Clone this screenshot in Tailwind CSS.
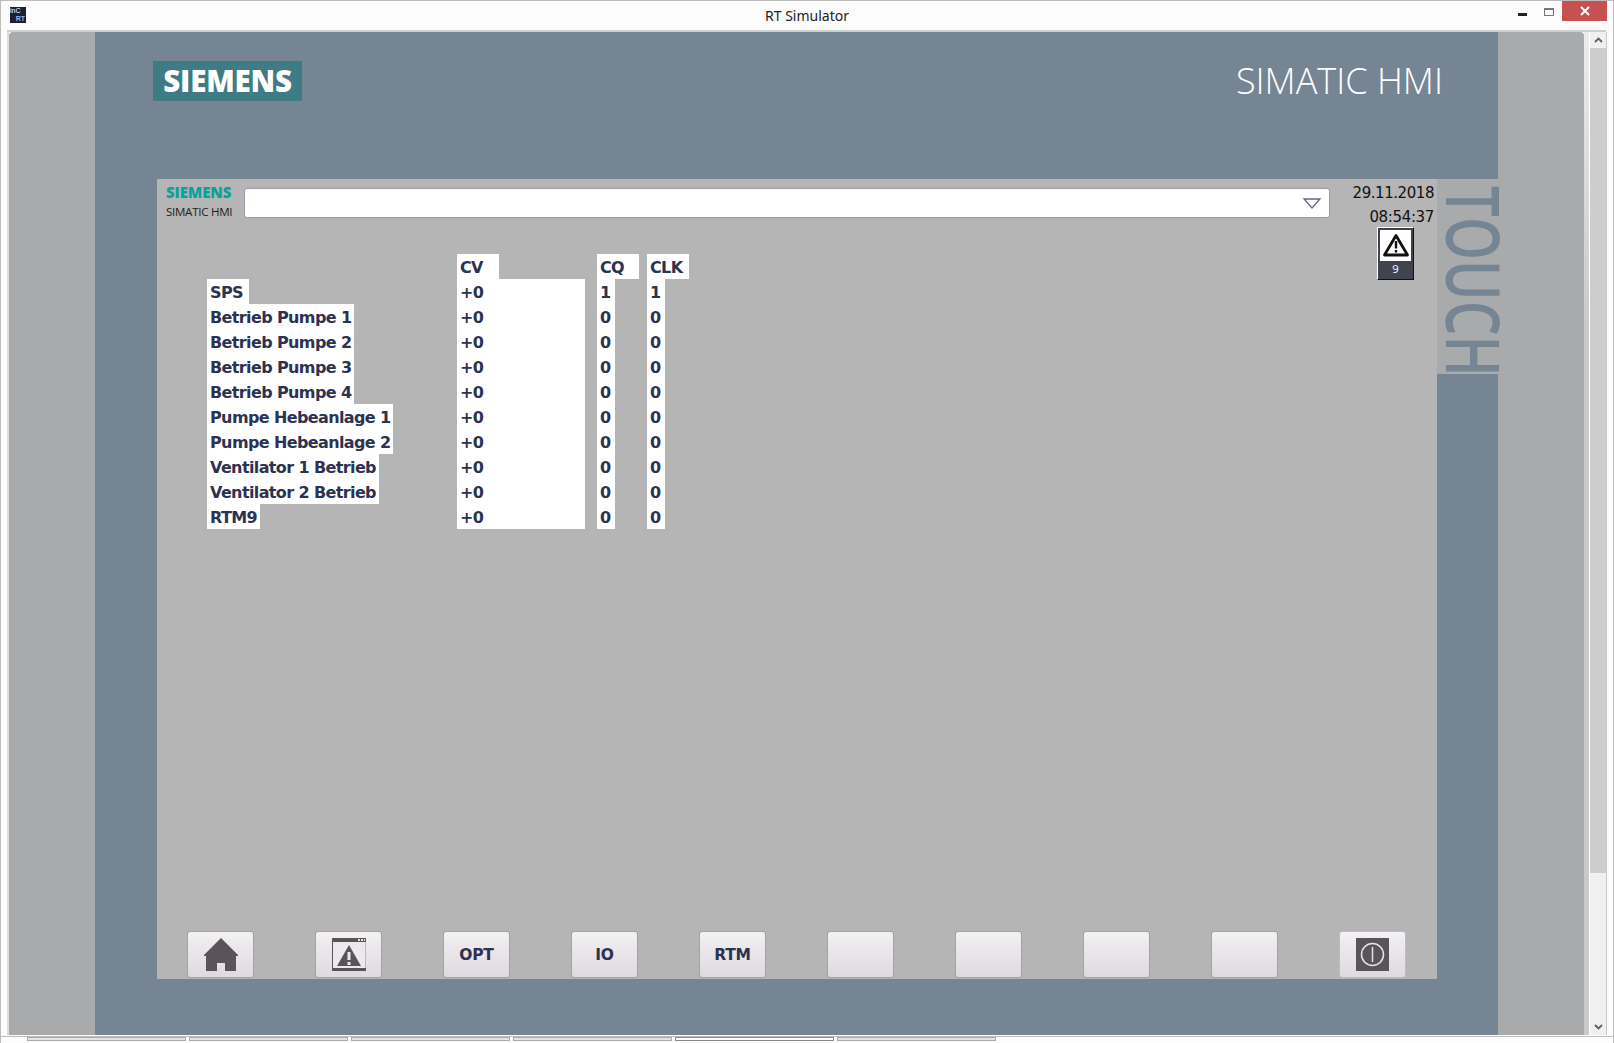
<!doctype html>
<html><head><meta charset="utf-8"><script src="https://cdn.jsdelivr.net/npm/@tailwindcss/browser@4"></script></head>
<body class="w-[1614px] h-[1043px] overflow-hidden bg-[#fcfcfc] font-['Open_Sans',sans-serif]">
<div class="relative w-[1614px] h-[1043px] border-x border-t border-[#bdbdbd] flex flex-col">
  <!-- title bar -->
  <div class="h-[29px] flex items-center relative shrink-0">
    <div class="absolute left-[9px] top-[6px] w-4 h-4 bg-[#1b2038] overflow-hidden leading-[8px] text-[7px] font-['Liberation_Sans',sans-serif]"><div class="text-white whitespace-nowrap">inC</div><div class="text-[#9fb4e6] text-right font-bold pr-[1px]">RT</div></div>
    <div class="w-full text-center text-[14px] text-[#222] font-['Noto_Sans',sans-serif]">RT Simulator</div>
    <div class="absolute left-[1517px] top-[12px] w-[9px] h-[3px] bg-[#222]"></div>
    <div class="absolute left-[1543px] top-[7px] w-[10px] h-[8px] border border-[#777] border-t-2"></div>
    <div class="absolute left-[1561px] top-0 w-[45px] h-[20px] bg-[#c75050] flex items-center justify-center"><svg width="10" height="10" viewBox="0 0 10 10"><path d="M1 1L9 9M9 1L1 9" stroke="#fff" stroke-width="2"/></svg></div>
  </div>
  <!-- client row -->
  <div class="flex ml-[6px] mr-[7px] h-[1005px] shrink-0 border-t-2 border-[#d0d0d0]">
    <div class="w-[1577px] h-[1003px] shrink-0 border-l-2 border-[#dedede] flex">
    <div class="w-[1575px] h-[1003px] bg-[#a9aaac] rounded-t-[4px] flex justify-center shrink-0">
      <div class="w-[1403px] bg-[#768594] flex flex-col items-stretch relative">
        <div class="h-[147px] relative shrink-0 flex justify-between pl-[58px] pr-[55px] pt-[29px]">
          <div class="w-[149px] h-[40px] bg-[#3f7b84] flex items-center justify-center text-white text-[29.5px] font-extrabold tracking-[-0.2px]">SIEMENS</div>
          <div class="text-white text-[36px] font-light leading-[40px] whitespace-nowrap">SIMATIC HMI</div>
        </div>
        <div class="flex items-start pl-[62px]">
          <div class="w-[1280px] h-[800px] bg-[#b5b5b5] flex flex-col">
            <div class="flex h-[75px] relative shrink-0">
              <div class="w-[87px] pl-[9px] pt-[4px] shrink-0">
                <div class="text-[15px] leading-[18px] font-extrabold text-[#0aa29e] tracking-[-0.1px]">SIEMENS</div>
                <div class="text-[11.6px] leading-[20px] text-[#222] mt-[1px] tracking-[-0.3px] whitespace-nowrap">SIMATIC HMI</div>
              </div>
              <div class="mt-[9px] w-[1086px] h-[30px] bg-white border border-[#9b9ba9] rounded-[3px] flex items-center justify-end pr-[8px]">
                <svg width="18" height="11" viewBox="0 0 18 11"><path d="M1 1H17L9 10Z" fill="none" stroke="#666a7c" stroke-width="1.3"/></svg>
              </div>
              <div class="flex-1 flex flex-col items-end pr-[3px] pt-[2px] text-[15px] leading-[24px] text-[#111] font-['DejaVu_Sans',sans-serif]">
                <div class="tracking-[-0.45px]">29.11.2018</div>
                <div class="tracking-[-0.35px]">08:54:37</div>
                <div class="absolute left-[1220px] top-[48px] w-[37px] h-[53px] bg-[#41444f] border border-[#111] border-l-white border-t-white flex flex-col items-center">
                  <div class="w-[31px] h-[31px] mt-[2px] bg-white flex items-center justify-center">
                    <svg width="26" height="25" viewBox="0 0 26 25"><path d="M13 2.5L24.5 22H1.5Z" fill="none" stroke="#111" stroke-width="2.8" stroke-linejoin="round"/><path d="M13 8v7.5M13 17v2.4" stroke="#111" stroke-width="2.4"/></svg>
                  </div>
                  <div class="text-[11px] text-[#dfe6f5] leading-[18px]">9</div>
                </div>
              </div>
            </div>
            <!-- data table -->
            <div class="grid grid-cols-[250px_140px_50px_1fr] pl-[50px] text-[16px] leading-[27px] font-bold text-[#2d3250] font-['DejaVu_Sans',sans-serif] tracking-[-0.62px] whitespace-nowrap [&>div]:h-[25px] [&_span]:h-[25px]">
              <div></div><div class="w-[42px] bg-white pl-[3px]">CV</div><div class="w-[42px] bg-white pl-[3px]">CQ</div><div class="w-[42px] bg-white pl-[3px]">CLK</div>
              <div><span class="block w-[42px] bg-white pl-[3px]">SPS</span></div><div class="w-[128px] bg-white pl-[3px]">+0</div><div class="w-[18px] bg-white pl-[3px]">1</div><div class="w-[18px] bg-white pl-[3px]">1</div>
              <div><span class="block w-[147px] bg-white pl-[3px]">Betrieb Pumpe 1</span></div><div class="w-[128px] bg-white pl-[3px]">+0</div><div class="w-[18px] bg-white pl-[3px]">0</div><div class="w-[18px] bg-white pl-[3px]">0</div>
              <div><span class="block w-[147px] bg-white pl-[3px]">Betrieb Pumpe 2</span></div><div class="w-[128px] bg-white pl-[3px]">+0</div><div class="w-[18px] bg-white pl-[3px]">0</div><div class="w-[18px] bg-white pl-[3px]">0</div>
              <div><span class="block w-[147px] bg-white pl-[3px]">Betrieb Pumpe 3</span></div><div class="w-[128px] bg-white pl-[3px]">+0</div><div class="w-[18px] bg-white pl-[3px]">0</div><div class="w-[18px] bg-white pl-[3px]">0</div>
              <div><span class="block w-[147px] bg-white pl-[3px]">Betrieb Pumpe 4</span></div><div class="w-[128px] bg-white pl-[3px]">+0</div><div class="w-[18px] bg-white pl-[3px]">0</div><div class="w-[18px] bg-white pl-[3px]">0</div>
              <div><span class="block w-[186px] bg-white pl-[3px]">Pumpe Hebeanlage 1</span></div><div class="w-[128px] bg-white pl-[3px]">+0</div><div class="w-[18px] bg-white pl-[3px]">0</div><div class="w-[18px] bg-white pl-[3px]">0</div>
              <div><span class="block w-[186px] bg-white pl-[3px]">Pumpe Hebeanlage 2</span></div><div class="w-[128px] bg-white pl-[3px]">+0</div><div class="w-[18px] bg-white pl-[3px]">0</div><div class="w-[18px] bg-white pl-[3px]">0</div>
              <div><span class="block w-[172px] bg-white pl-[3px]">Ventilator 1 Betrieb</span></div><div class="w-[128px] bg-white pl-[3px]">+0</div><div class="w-[18px] bg-white pl-[3px]">0</div><div class="w-[18px] bg-white pl-[3px]">0</div>
              <div><span class="block w-[172px] bg-white pl-[3px]">Ventilator 2 Betrieb</span></div><div class="w-[128px] bg-white pl-[3px]">+0</div><div class="w-[18px] bg-white pl-[3px]">0</div><div class="w-[18px] bg-white pl-[3px]">0</div>
              <div><span class="block w-[53px] bg-white pl-[3px]">RTM9</span></div><div class="w-[128px] bg-white pl-[3px]">+0</div><div class="w-[18px] bg-white pl-[3px]">0</div><div class="w-[18px] bg-white pl-[3px]">0</div>
            </div>
            <!-- buttons -->
            <div class="mt-auto mb-[1px] flex gap-[61px] pl-[30px] text-[15.5px] font-bold text-[#2d3250] font-['DejaVu_Sans',sans-serif]">
              <div class="w-[67px] h-[47px] rounded-[3px] border border-[#a0a0ae] bg-linear-to-b from-[#f3f1f4] via-[#e8e4e8] to-[#dfdadd] flex items-center justify-center">
                <svg width="34" height="33" viewBox="0 0 34 33"><path d="M17 0L34 17V18H32V33H21V25H13V33H2V18H0V17Z" fill="#5a5358"/></svg>
              </div>
              <div class="w-[67px] h-[47px] rounded-[3px] border border-[#a0a0ae] bg-linear-to-b from-[#f3f1f4] via-[#e8e4e8] to-[#dfdadd] flex items-center justify-center">
                <svg width="34" height="33" viewBox="0 0 34 33"><rect x=".5" y="3" width="33" height="28" fill="#ece9ec" stroke="#bdb8bc"/><path d="M.5 0V33" stroke="#5a5358"/><rect width="34" height="4" fill="#5a5358"/><rect y="30" width="34" height="3" fill="#5a5358"/><path d="M26 1h2v2h-2zM29 1h2v2h-2zM32 1h1v2h-1z" fill="#e8e4e8"/><path d="M17 7L29 28H5Z" fill="#5a5358"/><path d="M15.5 14h3v8h-3zM15.5 24h3v3h-3z" fill="#ece9ec"/></svg>
              </div>
              <div class="w-[67px] h-[47px] rounded-[3px] border border-[#a0a0ae] bg-linear-to-b from-[#f3f1f4] via-[#e8e4e8] to-[#dfdadd] flex items-center justify-center pt-[2px] tracking-[-0.2px]">OPT</div>
              <div class="w-[67px] h-[47px] rounded-[3px] border border-[#a0a0ae] bg-linear-to-b from-[#f3f1f4] via-[#e8e4e8] to-[#dfdadd] flex items-center justify-center pt-[2px] tracking-[-0.2px]">IO</div>
              <div class="w-[67px] h-[47px] rounded-[3px] border border-[#a0a0ae] bg-linear-to-b from-[#f3f1f4] via-[#e8e4e8] to-[#dfdadd] flex items-center justify-center pt-[2px] tracking-[-0.2px]">RTM</div>
              <div class="w-[67px] h-[47px] rounded-[3px] border border-[#a0a0ae] bg-linear-to-b from-[#f3f1f4] via-[#e8e4e8] to-[#dfdadd]"></div>
              <div class="w-[67px] h-[47px] rounded-[3px] border border-[#a0a0ae] bg-linear-to-b from-[#f3f1f4] via-[#e8e4e8] to-[#dfdadd]"></div>
              <div class="w-[67px] h-[47px] rounded-[3px] border border-[#a0a0ae] bg-linear-to-b from-[#f3f1f4] via-[#e8e4e8] to-[#dfdadd]"></div>
              <div class="w-[67px] h-[47px] rounded-[3px] border border-[#a0a0ae] bg-linear-to-b from-[#f3f1f4] via-[#e8e4e8] to-[#dfdadd]"></div>
              <div class="w-[67px] h-[47px] rounded-[3px] border border-[#a9bfdc] bg-linear-to-b from-[#f3f1f4] via-[#e8e4e8] to-[#dfdadd] flex items-center justify-center">
                <svg width="33" height="33" viewBox="0 0 33 33"><rect width="33" height="33" fill="#59535a"/><circle cx="16.5" cy="16.5" r="11" fill="none" stroke="#e4e4e4" stroke-width="1.5"/><path d="M16.5 9v15" stroke="#e4e4e4" stroke-width="1.5"/></svg>
              </div>
            </div>
          </div>
          <div class="w-[61px] h-[195px] bg-[#a9aaac] relative">
            <div class="absolute -right-[3px] top-[7px] h-[244px] text-[#768594] text-[74px] leading-[54px] font-semibold [writing-mode:vertical-rl] origin-top scale-y-[0.74] whitespace-nowrap">TOUCH</div>
          </div>
        </div>
      </div>
    </div>
    </div>
    <!-- scrollbar -->
    <div class="w-[5px] h-[1003px] bg-linear-to-b from-[#ececec] to-[#c9c9c9] to-30% shrink-0"></div>
    <div class="w-[18px] h-[1003px] border-l border-r border-l-white border-r-[#c8c8c8] bg-[#f0f0f0] flex flex-col shrink-0">
      <div class="h-[16px] flex items-center justify-center shrink-0"><svg width="9" height="6" viewBox="0 0 9 6"><path d="M1 5L4.5 1.5L8 5" fill="none" stroke="#606060" stroke-width="1.8"/></svg></div>
      <div class="h-[825px] bg-[#cdcdcd] shrink-0"></div>
      <div class="mt-auto h-[16px] flex items-center justify-center shrink-0"><svg width="9" height="6" viewBox="0 0 9 6"><path d="M1 1L4.5 4.5L8 1" fill="none" stroke="#606060" stroke-width="1.8"/></svg></div>
    </div>
  </div>
  <!-- tabs -->
  <div class="flex gap-[3px] pl-[27px] h-[5px] border-t border-[#bdbdbd] mt-[1px] -mx-[1px]">
    <div class="w-[159px] border border-[#aaa] bg-[#e4e4e4]"></div><div class="w-[159px] border border-[#aaa] bg-[#e4e4e4]"></div><div class="w-[159px] border border-[#aaa] bg-[#e4e4e4]"></div><div class="w-[159px] border border-[#aaa] bg-[#e4e4e4]"></div><div class="w-[159px] border border-[#888] bg-white"></div><div class="w-[159px] border border-[#aaa] bg-[#e4e4e4]"></div>
  </div>
</div>
</body></html>
